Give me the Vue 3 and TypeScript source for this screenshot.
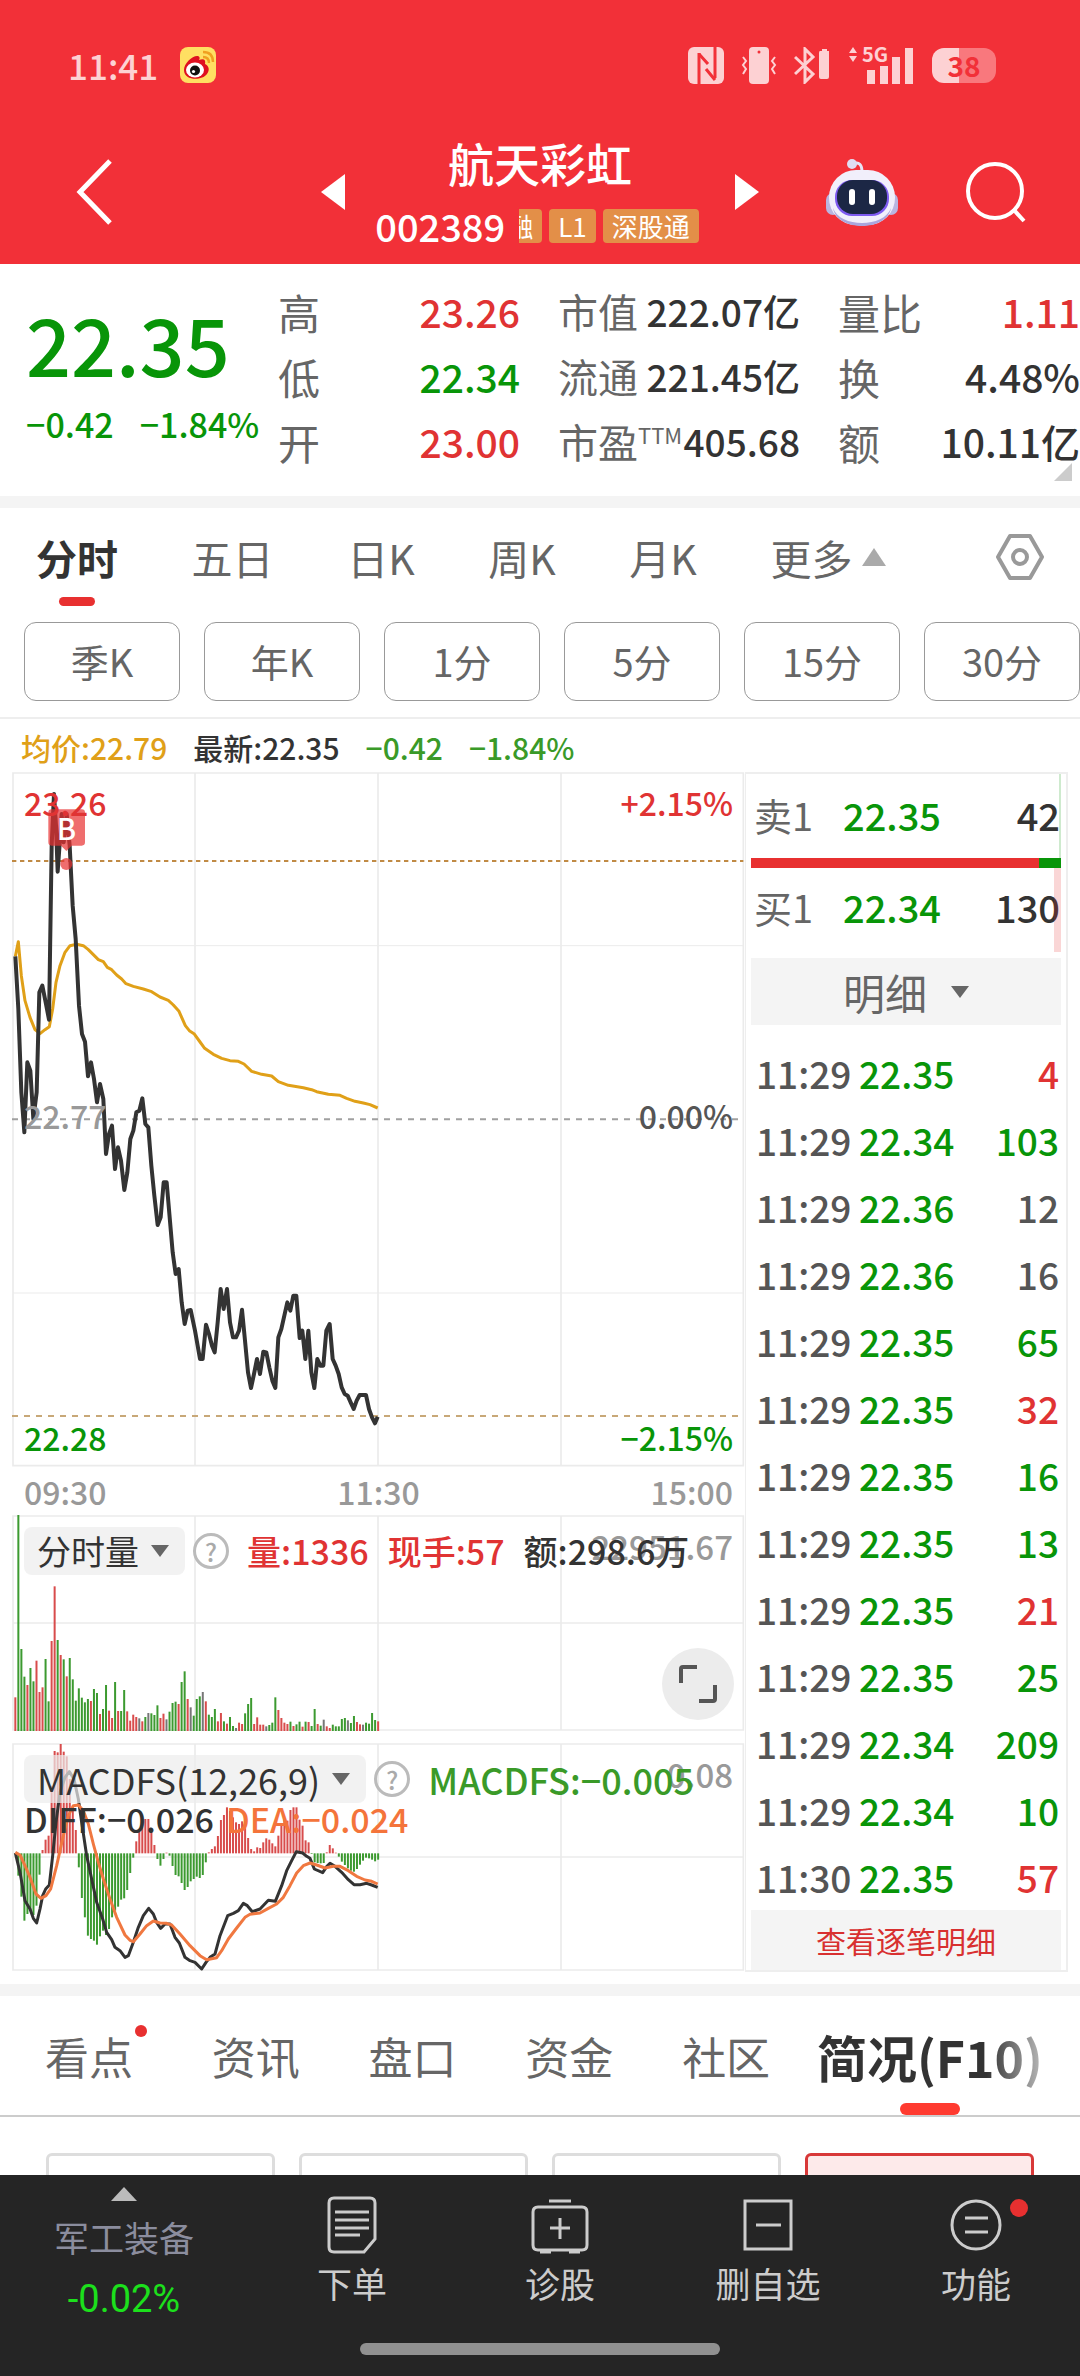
<script setup lang="ts">
import { ref } from 'vue'

type Tone = 'up' | 'down' | 'flat' | 'dark'

interface Bar {
  x: number
  y: number
  h: number
  tone: Tone
}

interface Stat {
  label: string
  sup?: string
  value: string
  tone: Tone
}

interface Trade {
  time: string
  price: string
  volume: number
  tone: Tone
}

const STEP = 9.07
const FIRST = 43
const toneOf: Record<string, Tone> = { r: 'up', g: 'down', k: 'flat' }

const stats: Stat[][] = [
  [
    { label: '高', value: '23.26', tone: 'up' },
    { label: '低', value: '22.34', tone: 'down' },
    { label: '开', value: '23.00', tone: 'up' },
  ],
  [
    { label: '市值', value: '222.07亿', tone: 'dark' },
    { label: '流通', value: '221.45亿', tone: 'dark' },
    { label: '市盈', sup: 'TTM', value: '405.68', tone: 'dark' },
  ],
  [
    { label: '量比', value: '1.11', tone: 'up' },
    { label: '换', value: '4.48%', tone: 'dark' },
    { label: '额', value: '10.11亿', tone: 'dark' },
  ],
]

const periods = ['分时', '五日', '日K', '周K', '月K']
const activePeriod = ref('分时')
const chips = ['季K', '年K', '1分', '5分', '15分', '30分']

const trades: Trade[] = [
  { time: '11:29', price: '22.35', volume: 4, tone: 'up' },
  { time: '11:29', price: '22.34', volume: 103, tone: 'down' },
  { time: '11:29', price: '22.36', volume: 12, tone: 'flat' },
  { time: '11:29', price: '22.36', volume: 16, tone: 'flat' },
  { time: '11:29', price: '22.35', volume: 65, tone: 'down' },
  { time: '11:29', price: '22.35', volume: 32, tone: 'up' },
  { time: '11:29', price: '22.35', volume: 16, tone: 'down' },
  { time: '11:29', price: '22.35', volume: 13, tone: 'down' },
  { time: '11:29', price: '22.35', volume: 21, tone: 'up' },
  { time: '11:29', price: '22.35', volume: 25, tone: 'down' },
  { time: '11:29', price: '22.34', volume: 209, tone: 'down' },
  { time: '11:29', price: '22.34', volume: 10, tone: 'down' },
  { time: '11:30', price: '22.35', volume: 57, tone: 'up' },
]

const tabs = ['看点', '资讯', '盘口', '资金', '社区', '简况(F10)']
const activeTab = ref('简况(F10)')

const priceLine =
  '46,592 55,750 64,1000 73,1120 82,910 91,935 100,1080 110,1000 118,700 127,680 137,730 147,782 155,260 162,105 168,200 173,338 180,240 185,165 191,250 200,165 209,260 218,440 227,540 237,740 246,825 255,848 264,952 273,910 282,960 291,1030 300,975 310,1020 318,1185 327,1125 336,1100 345,1230 354,1165 363,1205 373,1293 382,1240 391,1140 400,1115 409,1060 418,1055 427,1018 436,1095 445,1105 454,1220 463,1310 473,1398 482,1375 491,1270 500,1270 509,1375 518,1480 527,1545 536,1530 545,1630 554,1695 563,1655 572,1653 585,1715 600,1800 608,1800 618,1697 627,1725 636,1760 644,1780 653,1690 662,1590 671,1650 681,1590 690,1690 699,1735 708,1735 717,1715 726,1652 735,1745 744,1840 753,1887 762,1845 771,1800 780,1845 790,1778 799,1780 808,1825 817,1865 826,1887 835,1735 844,1710 853,1670 862,1630 871,1655 880,1610 889,1610 899,1737 907,1715 916,1800 925,1715 934,1840 943,1887 952,1800 961,1820 970,1820 979,1715 989,1695 998,1800 1007,1820 1016,1845 1025,1885 1034,1905 1043,1910 1052,1930 1061,1950 1070,1925 1079,1908 1098,1908 1107,1950 1116,1975 1125,1993 1133,1973'

const averageLine =
  '46,592 55,548 64,650 75,725 90,775 105,812 120,824 135,812 148,803 158,750 168,670 180,620 195,580 210,560 230,556 250,560 265,572 280,587 295,602 310,608 322,625 335,632 350,648 365,660 378,674 400,682 430,690 455,698 480,714 505,724 520,738 537,757 545,775 556,800 568,815 582,824 598,846 614,868 640,886 665,898 690,905 715,907 732,915 755,937 785,946 815,951 835,968 865,979 910,986 935,992 950,998 985,1006 1020,1009 1040,1018 1065,1027 1090,1032 1110,1037 1133,1047'

const diffLine =
  '46,372 60,430 75,515 90,540 100,568 110,582 120,540 128,500 137,480 148,468 158,380 168,280 180,190 195,145 208,128 222,150 235,210 245,280 260,380 275,450 290,520 308,570 320,610 335,632 345,655 360,665 375,685 385,680 400,640 415,595 430,560 446,538 460,555 470,580 482,598 495,585 510,585 525,625 538,642 555,685 570,695 585,700 605,720 618,700 630,685 645,675 660,620 683,560 700,553 715,545 730,523 742,530 757,548 780,540 805,514 826,517 845,470 860,425 875,395 889,368 908,372 920,382 930,388 943,420 968,431 980,413 990,403 1005,412 1025,430 1045,452 1062,467 1080,467 1100,463 1115,468 1133,475'

const deaLine =
  '46,370 60,378 75,410 90,445 108,495 123,508 138,500 152,480 170,410 190,320 205,260 220,230 235,228 250,245 265,285 280,345 295,400 310,450 330,510 350,565 375,618 390,634 400,638 420,615 440,590 460,576 480,582 500,583 515,588 540,615 570,650 600,680 620,692 650,686 665,665 685,630 710,597 735,565 750,556 780,552 805,538 830,525 850,505 870,470 890,432 910,410 930,402 950,408 975,417 1000,412 1020,412 1045,425 1070,442 1095,453 1115,457 1133,465'

const volumeTops =
  'r595 g48 g450 g533 r558 g507 g547 r485 r579 r565 g480 g607 r426 r262 g423 r468 g481 r532 g477 g541 g605 g568 g596 g610 g600 r606 g570 g582 r645 g630 g558 r635 r657 g549 r636 g636 g573 r637 r665 r647 r654 k658 r667 g654 k642 g643 g648 g619 r657 r644 k661 g638 g612 g608 r615 g549 g517 r600 k625 g650 g600 g592 k579 r607 g647 g654 g630 r667 r642 g667 r674 g654 g681 k687 r671 r675 g643 g615 g597 r675 r655 r677 r677 k682 g678 g671 g595 r633 r657 r671 r675 g668 r681 g676 g668 r683 g668 r669 g681 g630 r675 g680 k662 r682 r687 g677 g682 g682 g660 g657 k664 g672 g651 r669 r676 k677 g671 g674 g642 g663 r667'

const macdLevels = [
  373, 440, 503, 575, 555, 545, 558, 530, 437, 363, 332, 320, 170, 66, 70, 45, 68, 82, 150, 230, 303,
  415, 507, 565, 620, 630, 635, 647, 622, 605, 618, 600, 565, 545, 533, 512, 508, 483, 432, 386, 337,
  303, 270, 270, 270, 307, 348, 390, 410, 390, 371, 380, 411, 438, 442, 462, 483, 474, 457, 450, 443,
  447, 438, 400, 370, 360, 352, 321, 273, 258, 235, 246, 265, 280, 285, 277, 285, 327, 360, 367, 355,
  357, 340, 328, 332, 343, 352, 320, 290, 270, 275, 243, 235, 235, 272, 290, 334, 340, 375, 400, 402,
  403, 402, 370, 348, 358, 371, 383, 398, 408, 418, 425, 428, 420, 407, 395, 386, 388, 392, 397, 392,
]

const VOLUME_BASE = 696
const MACD_BASE = 373

const volumeBars: Bar[] = volumeTops.split(' ').map((item, i) => {
  const top = Number(item.slice(1))
  return { x: FIRST + i * STEP, y: top, h: VOLUME_BASE - top, tone: toneOf[item[0]] }
})

const macdBars: Bar[] = macdLevels.map((level, i) => ({
  x: FIRST + i * STEP,
  y: Math.min(level, MACD_BASE),
  h: Math.abs(level - MACD_BASE),
  tone: level < MACD_BASE ? 'up' : 'down',
}))
</script>

<template>
  <div class="page">
    <header class="header">
      <div class="status">
        <div class="status-side">
          <span class="clock">11:41</span>
          <svg class="weibo" viewBox="0 0 36 36" aria-hidden="true">
            <rect width="36" height="36" rx="8" fill="#ffdf62" />
            <path d="M4 23c0-7 9-15 14-14 2 1 2 2 1 4 5-2 7 0 6 4 4 2 5 6 2 10-5 7-23 7-23-4z" fill="#df1020" />
            <ellipse cx="15" cy="23" rx="9" ry="7.500" fill="#fff" />
            <circle cx="15" cy="23.500" r="5" fill="#111" />
            <circle cx="13.500" cy="24.500" r="1.600" fill="#fff" />
            <path d="M23 10c4 0 6 2 6 6M23 5c7 0 10 4 10 10" fill="none" stroke="#f0a020" stroke-width="2.400" />
          </svg>
        </div>
        <div class="status-side icons">
          <svg width="36" height="37" viewBox="0 0 36 37" aria-hidden="true">
            <rect width="36" height="37" rx="6" fill="#fdd1d3" />
            <path d="M11 37V6M27 31V0" fill="none" stroke="#f23038" stroke-width="3" />
            <path d="M11 7l9 10M18 22l9 11" fill="none" stroke="#f23038" stroke-width="3" />
          </svg>
          <svg width="36" height="37" viewBox="0 0 36 37" aria-hidden="true">
            <rect x="8" width="20" height="37" rx="4" fill="#fdd1d3" />
            <circle cx="18" cy="5" r="1.500" fill="#f23038" />
            <path d="M2 10l3 4-3 4 3 4-3 5M34 10l-3 4 3 4-3 4 3 5" fill="none" stroke="#fdd1d3" stroke-width="2" />
          </svg>
          <svg width="36" height="37" viewBox="0 0 36 37" aria-hidden="true">
            <path d="M1 10l18 17-8 8V2l8 8L1 27" fill="none" stroke="#fdd1d3" stroke-width="3" />
            <path d="M26 4h2V2h5v2h2v26q0 2-2 2h-6q-2 0-2-2V6q0-2 1-2z" fill="#fdd1d3" />
          </svg>
          <svg class="signal" width="68" height="38" viewBox="0 0 68 38" aria-hidden="true">
            <path d="M2 7l4-6 4 6zM2 10l4 6 4-6z" fill="#fdd1d3" />
            <text x="15" y="16" class="net">5G</text>
            <path d="M24 38V24M37 38V20M49 38V11M62 38V2" fill="none" stroke="#fdd1d3" stroke-width="8" />
          </svg>
          <div class="battery"><span>38</span></div>
        </div>
      </div>
      <div class="titlebar">
        <button class="plain back" aria-label="返回">
          <svg width="36" height="66" viewBox="0 0 36 66"><path d="M34 2L4 33l30 31" fill="none" stroke="#fff" stroke-width="5" /></svg>
        </button>
        <div class="stock-nav">
          <button class="plain" aria-label="上一只">
            <svg width="24" height="36" viewBox="0 0 24 36"><path d="M0 18L24 0v36z" fill="#fff" /></svg>
          </button>
          <div class="stock">
            <h1>航天彩虹</h1>
            <div class="code">
              <span>002389</span>
              <div class="tags">
                <span class="tag cut"><b>融</b></span>
                <span class="tag">L1</span>
                <span class="tag">深股通</span>
              </div>
            </div>
          </div>
          <button class="plain" aria-label="下一只">
            <svg width="24" height="36" viewBox="0 0 24 36"><path d="M24 18L0 0v36z" fill="#fff" /></svg>
          </button>
        </div>
        <div class="actions">
          <button class="plain" aria-label="智能助手">
            <svg width="72" height="68" viewBox="0 0 72 68">
              <path d="M27 6c6-3 9 1 9 8" fill="none" stroke="#e6e3f5" stroke-width="3" />
              <circle cx="26" cy="6" r="5" fill="#e0dcf2" />
              <rect x="0" y="35" width="14" height="22" rx="7" fill="#b9b5e0" />
              <rect x="58" y="35" width="14" height="22" rx="7" fill="#b9b5e0" />
              <rect x="3" y="12" width="66" height="55" rx="27" fill="#f1effb" />
              <path d="M7 50c7 20 51 20 58 0-4 24-54 24-58 0z" fill="#aaa6dd" />
              <rect x="9" y="22" width="54" height="36" rx="17" fill="#7e5bf0" />
              <rect x="11" y="22" width="50" height="34" rx="16" fill="#1c2745" />
              <rect x="23" y="31" width="6" height="16" rx="3" fill="#fff" />
              <rect x="43" y="31" width="6" height="16" rx="3" fill="#fff" />
            </svg>
          </button>
          <button class="plain" aria-label="搜索">
            <svg width="60" height="62" viewBox="0 0 60 62">
              <circle cx="29" cy="30" r="27" fill="none" stroke="#fff" stroke-width="4" />
              <path d="M47 48l11 12" stroke="#fff" stroke-width="4" />
            </svg>
          </button>
        </div>
      </div>
    </header>

    <main class="content">
      <section class="quote">
        <div class="last">
          <div class="price">22.35</div>
          <div class="change"><span>−0.42</span><span>−1.84%</span></div>
        </div>
        <dl v-for="(column, c) in stats" :key="c" class="stats" :class="{ compact: c === 1 }">
          <div v-for="s in column" :key="s.label" class="stat">
            <dt>{{ s.label }}<sup v-if="s.sup">{{ s.sup }}</sup></dt>
            <dd :class="s.tone">{{ s.value }}</dd>
          </div>
        </dl>
        <i class="corner"></i>
      </section>

      <nav class="periods">
        <button
          v-for="p in periods"
          :key="p"
          class="plain period"
          :class="{ active: p === activePeriod }"
          @click="activePeriod = p"
        >{{ p }}</button>
        <button class="plain period more">更多<i class="tri-up"></i></button>
        <button class="plain gear" aria-label="设置">
          <svg width="48" height="46" viewBox="0 0 48 46">
            <path d="M14 2h20l12 21-12 21H14L2 23z" fill="none" stroke="#999" stroke-width="4" stroke-linejoin="round" />
            <circle cx="24" cy="23" r="7" fill="none" stroke="#999" stroke-width="4" />
          </svg>
        </button>
      </nav>
      <div class="chips">
        <button v-for="c in chips" :key="c" class="chip">{{ c }}</button>
      </div>

      <div class="info">
        <span class="avg">均价:22.79</span>
        <span class="dark">最新:22.35</span>
        <span class="soft">−0.42</span>
        <span class="soft">−1.84%</span>
      </div>

      <section class="board">
        <div class="charts">
          <div class="panel panel-price">
            <svg viewBox="36 39 2199 2085" preserveAspectRatio="none" aria-hidden="true">
              <g class="grid">
                <path d="M39 42H2230V2120H39zM585 42V2120M1134 42V2120M1683 42V2120" />
                <path d="M39 560H2230M39 1602H2230" class="thin" />
              </g>
              <path d="M36 306H2230" class="dash-high" />
              <path d="M36 1081H2230" class="dash-mid" />
              <path d="M36 1971H2230" class="dash-low" />
              <polyline :points="averageLine" class="line average" />
              <polyline :points="priceLine" class="line main-line" />
              <path d="M155 151h90q10 0 10 10v89q0 10-10 10h-30l-16 16-16-16h-28q-10 0-10-10v-89q0-10 10-10z" class="mark" />
              <circle cx="199" cy="315" r="18" class="mark" />
            </svg>
            <b class="marker">B</b>
            <div class="scale scale-high"><span class="up">23.26</span><span class="up">+2.15%</span></div>
            <div class="scale scale-mid"><span>22.77</span><span class="flat">0.00%</span></div>
            <div class="scale scale-low"><span class="down">22.28</span><span class="down">−2.15%</span></div>
          </div>
          <div class="times"><span>09:30</span><span>11:30</span><span>15:00</span></div>

          <div class="panel panel-volume">
            <svg viewBox="36 48 2199 648" preserveAspectRatio="none" aria-hidden="true">
              <path d="M39 51H2230V693H39zM585 51V693M1134 51V693M1683 51V693M39 372H2230" class="grid" />
              <rect v-for="(b, i) in volumeBars" :key="i" :x="b.x" :y="b.y" width="6" :height="b.h" :class="'bar-' + b.tone" />
            </svg>
            <span class="peak">22951.67</span>
            <div class="legend">
              <button class="picker">分时量<i class="tri-down"></i></button>
              <button class="plain help" aria-label="说明">?</button>
              <span class="up">量:1336</span>
              <span class="up">现手:57</span>
              <span class="dark">额:298.6万</span>
            </div>
            <button class="plain expand" aria-label="全屏">
              <svg width="38" height="38" viewBox="0 0 38 38">
                <path d="M2 18V4q0-2 2-2h14M36 20v14q0 2-2 2H20" fill="none" stroke="#555" stroke-width="4" />
              </svg>
            </button>
          </div>

          <div class="panel panel-macd">
            <svg viewBox="36 42 2199 684" preserveAspectRatio="none" aria-hidden="true">
              <path d="M39 45H2230V723H39zM585 45V723M1134 45V723M1683 45V723M39 384H2230" class="grid" />
              <rect v-for="(b, i) in macdBars" :key="i" :x="b.x" :y="b.y" width="6" :height="b.h" :class="'bar-' + b.tone" />
              <polyline :points="diffLine" class="line diff" />
              <polyline :points="deaLine" class="line dea" />
            </svg>
            <span class="peak">0.08</span>
            <div class="legend legend-macd">
              <button class="picker">MACDFS(12,26,9)<i class="tri-down"></i></button>
              <button class="plain help" aria-label="说明">?</button>
              <span class="soft">MACDFS:−0.005</span>
            </div>
            <div class="legend-two"><span class="dark">DIFF:−0.026</span><span class="orange">DEA:−0.024</span></div>
          </div>
        </div>

        <aside class="book">
          <div class="level">
            <span class="side">卖1</span><span class="level-price">22.35</span><span class="level-qty">42</span>
            <i class="depth sell"></i>
          </div>
          <div class="ratio"><i></i></div>
          <div class="level bid">
            <span class="side">买1</span><span class="level-price">22.34</span><span class="level-qty">130</span>
            <i class="depth buy"></i>
          </div>
          <button class="detail">明细<i class="tri-down"></i></button>
          <table class="trades">
            <tbody>
              <tr v-for="(t, i) in trades" :key="i">
                <td class="flat time">{{ t.time }}</td>
                <td class="down">{{ t.price }}</td>
                <td class="qty" :class="t.tone">{{ t.volume }}</td>
              </tr>
            </tbody>
          </table>
          <button class="all">查看逐笔明细</button>
        </aside>
      </section>

      <nav class="tabs">
        <button
          v-for="t in tabs"
          :key="t"
          class="plain tab"
          :class="{ active: t === activeTab, dot: t === '看点' }"
          @click="activeTab = t"
        ><span>{{ t }}</span></button>
      </nav>
      <div class="cards"><i></i><i></i><i></i><i class="on"></i></div>
    </main>

    <footer class="bottom">
      <div class="dock">
        <a href="#" class="sector">
          <i class="tri-up"></i>
          <span>军工装备</span>
          <em>-0.02%</em>
        </a>
        <a href="#" class="entry">
          <svg width="50" height="58" viewBox="0 0 50 58">
            <path d="M7 2h36q5 0 5 5v36L37 56H7q-5 0-5-5V7q0-5 5-5z" />
            <path d="M8 16h34M8 24h34M8 32h34M8 39h25" />
          </svg>
          <span>下单</span>
        </a>
        <a href="#" class="entry">
          <svg width="58" height="58" viewBox="0 0 58 58">
            <path d="M18 5h22M7 11h44q5 0 5 5v33q0 5-5 5H7q-5 0-5-5V16q0-5 5-5zM29 22v21M19 32h20M9 56h11M38 56h11" />
          </svg>
          <span>诊股</span>
        </a>
        <a href="#" class="entry">
          <svg width="50" height="58" viewBox="0 0 50 58"><path d="M2 5h46v48H2zM13 29h25" /></svg>
          <span>删自选</span>
        </a>
        <a href="#" class="entry badge">
          <svg width="52" height="58" viewBox="0 0 52 58"><circle cx="26" cy="29" r="24" /><path d="M15 22h23M15 36h23" /></svg>
          <span>功能</span>
        </a>
      </div>
      <div class="handle"></div>
    </footer>
  </div>
</template>

<style>
body {
  background: #fff;
}
</style>

<style scoped>
.page {
  display: flex;
  flex-direction: column;
  height: 100vh;
  overflow: hidden;
  font-family: 'Noto Sans CJK SC', 'Noto Sans', sans-serif;
  color: #333;
}
.page * {
  box-sizing: border-box;
}
svg {
  display: block;
  flex: none;
}
i,
em {
  font-style: normal;
}
a {
  text-decoration: none;
}
button {
  font: inherit;
  color: inherit;
  cursor: pointer;
  white-space: nowrap;
}
.plain {
  border: 0;
  padding: 0;
  background: none;
}
.up {
  color: #e03333;
}
.down {
  color: #089508;
}
.flat {
  color: #555;
}
.dark {
  color: #333;
}
.soft {
  color: #3a9a28;
}
.orange {
  color: #f4743b;
}

/* header */
.header {
  flex: none;
  background: #f23038;
  color: #fff;
}
.status {
  display: flex;
  justify-content: space-between;
  align-items: center;
  height: 124px;
  padding: 6px 84px 0 68px;
}
.status-side {
  display: flex;
  align-items: center;
  gap: 22px;
}
.icons {
  gap: 17px;
}
.clock {
  font-size: 35px;
  font-weight: 500;
  line-height: 36px;
  color: #fdd1d3;
}
.weibo {
  width: 36px;
  height: 36px;
}
.signal {
  overflow: visible;
}
.net {
  font-size: 20px;
  font-weight: 700;
  fill: #fdd1d3;
}
.battery {
  width: 64px;
  height: 35px;
  border-radius: 12px;
  background: linear-gradient(to right, #fdd1d3 42%, #f9787d 42%);
  color: #f23038;
  font-size: 28px;
  font-weight: 700;
  line-height: 35px;
  text-align: center;
}
.titlebar {
  display: grid;
  grid-template-columns: 1fr auto 1fr;
  align-items: center;
  height: 140px;
  padding-bottom: 4px;
}
.back {
  justify-self: start;
  padding-left: 76px;
}
.stock-nav {
  display: flex;
  align-items: center;
}
.stock {
  display: flex;
  flex-direction: column;
  align-items: center;
  width: 390px;
}
h1 {
  margin: 0;
  font-size: 46px;
  font-weight: 500;
  line-height: 68px;
}
.code {
  display: flex;
  align-items: center;
  gap: 14px;
  font-size: 38px;
  font-weight: 500;
  line-height: 60px;
}
.tags {
  display: flex;
  gap: 7px;
  padding-right: 6px;
}
.tag {
  height: 34px;
  padding: 0 9px;
  border-radius: 4px;
  background: #e38f48;
  font-size: 26px;
  font-weight: 400;
  line-height: 34px;
}
.tag.cut {
  display: flex;
  justify-content: flex-end;
  width: 23px;
  border-radius: 0 4px 4px 0;
  overflow: hidden;
}
.tag.cut b {
  font-weight: 400;
}
.actions {
  display: flex;
  justify-content: flex-end;
  align-items: center;
  gap: 68px;
  padding-right: 54px;
}

/* quote */
.content {
  flex: 1;
  min-height: 0;
  overflow: hidden;
}
.quote {
  position: relative;
  display: grid;
  grid-template-columns: 214px 1fr 1fr 1fr;
  gap: 38px;
  height: 244px;
  padding: 15px 0 0 26px;
  border-bottom: 12px solid #f4f4f4;
}
.last {
  color: #089508;
  font-weight: 500;
  white-space: nowrap;
}
.price {
  font-size: 79px;
  line-height: 128px;
}
.change {
  display: flex;
  gap: 26px;
  font-size: 34px;
  line-height: 34px;
}
.stats {
  margin: 0;
  font-size: 39px;
}
.compact {
  font-size: 37px;
}
.stat {
  display: flex;
  justify-content: space-between;
  height: 65px;
  line-height: 65px;
  white-space: nowrap;
}
dt {
  position: relative;
  font-size: 42px;
  color: #666;
}
.compact dt {
  font-size: 40px;
}
dt sup {
  position: absolute;
  left: 100%;
  top: 0;
  font-size: 22px;
  line-height: 50px;
}
dd {
  margin: 0;
  font-weight: 500;
}
.corner {
  position: absolute;
  right: 8px;
  bottom: 15px;
  border-left: 18px solid transparent;
  border-bottom: 18px solid #ccc;
}

/* periods */
.periods {
  display: flex;
  justify-content: space-between;
  align-items: center;
  height: 98px;
  padding: 0 36px 0 36px;
}
.period {
  position: relative;
  font-size: 41px;
  line-height: 94px;
  height: 98px;
  color: #666;
}
.period.active {
  font-weight: 700;
  color: #333;
}
.period.active::after {
  content: '';
  position: absolute;
  left: 50%;
  bottom: 0;
  width: 36px;
  height: 9px;
  margin-left: -18px;
  border-radius: 5px;
  background: #e83030;
}
.more {
  display: flex;
  align-items: center;
  gap: 10px;
}
.tri-up {
  border: 12px solid transparent;
  border-top: 0;
  border-bottom: 18px solid #aaa;
}
.tri-down {
  border: 9px solid transparent;
  border-bottom: 0;
  border-top: 12px solid #666;
}
.gear {
  margin-left: 36px;
}
.chips {
  display: flex;
  gap: 24px;
  height: 113px;
  padding: 16px 0 18px 24px;
  border-bottom: 2px solid #eee;
}
.chip {
  flex: 1;
  height: 79px;
  padding: 0 0 2px;
  border: 1px solid #999;
  border-radius: 12px;
  background: #fff;
  font-size: 38px;
  line-height: 74px;
  color: #666;
}
.info {
  display: flex;
  gap: 26px;
  height: 53px;
  padding: 0 21px;
  font-size: 30px;
  font-weight: 500;
  line-height: 56px;
}
.avg {
  color: #e0a018;
}

/* charts */
.board {
  display: grid;
  grid-template-columns: 733fr 323fr;
  padding: 0 12px;
  border-bottom: 12px solid #f4f4f4;
  height: 1224px;
}
.charts {
  min-width: 0;
}
.panel {
  position: relative;
}
.panel > svg {
  width: 100%;
  height: 100%;
}
.panel-price {
  height: 695px;
}
.panel-volume {
  height: 216px;
  margin-bottom: 12px;
}
.panel-macd {
  height: 228px;
}
.grid {
  fill: none;
  stroke: #ebebeb;
  stroke-width: 5;
}
.thin {
  stroke-width: 3;
}
.dash-high,
.dash-mid,
.dash-low {
  fill: none;
  stroke-width: 6;
}
.dash-high {
  stroke: #c08a44;
  stroke-dasharray: 13 11;
}
.dash-mid {
  stroke: #a0a0a0;
  stroke-dasharray: 18 18;
}
.dash-low {
  stroke: #c8a878;
  stroke-dasharray: 18 18;
}
.line {
  fill: none;
  stroke-linejoin: round;
}
.average {
  stroke: #e0a018;
  stroke-width: 9;
}
.main-line {
  stroke: #333;
  stroke-width: 12;
}
.diff {
  stroke: #333;
  stroke-width: 9;
}
.dea {
  stroke: #f07840;
  stroke-width: 9;
}
.mark {
  fill: rgba(232, 48, 48, 0.7);
}
.bar-up {
  fill: #d84c4c;
}
.bar-down {
  fill: #3c9a30;
}
.bar-flat {
  fill: #777;
}
.marker {
  position: absolute;
  left: 36px;
  top: 37px;
  width: 37px;
  font-size: 29px;
  font-weight: 500;
  line-height: 37px;
  text-align: center;
  color: #fff;
}
.scale {
  position: absolute;
  left: 12px;
  right: 12px;
  display: flex;
  justify-content: space-between;
  font-size: 32px;
  font-weight: 500;
  line-height: 40px;
  color: #999;
}
.scale-high {
  top: 10px;
}
.scale-mid {
  top: 323px;
}
.scale-low {
  bottom: 10px;
}
.times {
  display: flex;
  justify-content: space-between;
  height: 48px;
  padding: 0 12px;
  font-size: 32px;
  font-weight: 500;
  line-height: 48px;
  color: #999;
}
.peak {
  position: absolute;
  top: 8px;
  right: 12px;
  font-size: 33px;
  font-weight: 500;
  line-height: 46px;
  color: #999;
}
.legend,
.legend-two {
  position: absolute;
  left: 12px;
  top: 12px;
  display: flex;
  align-items: center;
  height: 48px;
  font-size: 34px;
  font-weight: 500;
  line-height: 48px;
  white-space: nowrap;
}
.legend-macd {
  font-size: 36px;
}
.legend-two {
  top: 52px;
  gap: 12px;
}
.legend > span {
  margin-right: 19px;
}
.picker {
  display: flex;
  align-items: center;
  gap: 12px;
  height: 48px;
  padding: 0 16px 0 13px;
  border: 0;
  border-radius: 8px;
  background: rgba(236, 236, 236, 0.7);
  font-weight: 400;
}
.help {
  width: 36px;
  height: 36px;
  margin: 0 18px 0 8px;
  border: 3px solid #bbb;
  border-radius: 50%;
  font-size: 25px;
  line-height: 30px;
  color: #aaa;
}
.expand {
  position: absolute;
  right: 11px;
  bottom: 11px;
  display: grid;
  place-items: center;
  width: 72px;
  height: 72px;
  border-radius: 50%;
  background: #ececec;
}

/* order book */
.book {
  display: flex;
  flex-direction: column;
  height: 1200px;
  padding: 0 5px;
  border: 2px solid #eee;
  border-left-width: 1px;
}
.level {
  position: relative;
  display: flex;
  height: 84px;
  padding: 0 1px 0 3px;
  font-size: 38px;
  font-weight: 500;
  line-height: 82px;
}
.level.bid {
  line-height: 78px;
}
.side {
  width: 89px;
  font-weight: 400;
  color: #666;
}
.level-price {
  color: #089508;
}
.level-qty {
  flex: 1;
  text-align: right;
}
.depth {
  position: absolute;
  right: 0;
  top: 0;
  width: 2px;
  height: 84px;
  background: rgba(8, 149, 8, 0.2);
}
.depth.buy {
  width: 7px;
  background: rgba(232, 48, 48, 0.2);
}
.ratio {
  height: 10px;
  background: #089508;
}
.ratio i {
  display: block;
  width: 93%;
  height: 10px;
  background: #e83030;
}
.detail {
  display: flex;
  flex: none;
  justify-content: center;
  align-items: center;
  gap: 24px;
  height: 67px;
  margin: 6px 0 14px;
  padding: 0;
  border: 0;
  background: #f4f4f4;
  font-size: 42px;
  line-height: 66px;
  color: #666;
}
.trades {
  width: 100%;
  border-collapse: collapse;
  font-size: 37px;
  font-weight: 500;
}
.trades td {
  height: 67px;
  padding: 0;
  line-height: 66px;
}
.trades .time {
  width: 108px;
  padding-left: 5px;
}
.trades .qty {
  padding-right: 2px;
  text-align: right;
}
.all {
  flex: none;
  height: 60px;
  padding: 0;
  border: 0;
  background: #f4f4f4;
  font-size: 30px;
  line-height: 58px;
  color: #d83030;
}

/* section tabs */
.tabs {
  display: flex;
  justify-content: space-between;
  height: 121px;
  padding: 0 37px 0 45px;
  border-bottom: 2px solid #ccc;
}
.tab {
  position: relative;
  font-size: 44px;
  line-height: 120px;
  color: #666;
}
.tab.active {
  margin-left: -22px;
  font-size: 50px;
  font-weight: 700;
}
.tab.active span {
  background: linear-gradient(to right, #333 75%, #bbb);
  background-clip: text;
  color: transparent;
}
.tab.active::after {
  content: '';
  position: absolute;
  left: 50%;
  bottom: 0;
  width: 60px;
  height: 12px;
  margin-left: -30px;
  border-radius: 6px;
  background: #ff3b30;
}
.dot {
  margin-right: 10px;
}
.dot::before {
  content: '';
  position: absolute;
  right: -14px;
  top: 29px;
  width: 12px;
  height: 12px;
  border-radius: 50%;
  background: #e83030;
}
.cards {
  display: grid;
  grid-template-columns: repeat(4, 1fr);
  gap: 24px;
  padding: 36px 46px 0;
}
.cards i {
  height: 80px;
  border: 3px solid #ddd;
  border-radius: 6px;
}
.cards .on {
  border-color: #d83838;
  background: #fdeaea;
}

/* bottom bar */
.bottom {
  flex: none;
  height: 201px;
  background: #252525;
}
.dock {
  display: grid;
  grid-template-columns: 248fr 208fr 208fr 208fr 208fr;
  height: 168px;
}
.sector,
.entry {
  display: flex;
  flex-direction: column;
  align-items: center;
  font-size: 35px;
  color: #ccc;
}
.sector {
  padding-top: 12px;
  line-height: 50px;
  color: #8b8d9e;
}
.sector .tri-up {
  border-width: 0 13px 14px;
  border-bottom-color: #bbb;
}
.sector span {
  padding: 11px 0 12px;
}
.sector em {
  font-family: Roboto, sans-serif;
  font-size: 38px;
  color: #1ce01c;
}
.entry {
  padding-top: 21px;
  line-height: 58px;
}
.entry svg {
  fill: none;
  stroke: #ccc;
  stroke-width: 3;
}
.badge {
  position: relative;
}
.badge::after {
  content: '';
  position: absolute;
  left: 50%;
  top: 24px;
  width: 18px;
  height: 18px;
  margin-left: 34px;
  border-radius: 50%;
  background: #e83030;
}
.handle {
  width: 360px;
  height: 12px;
  margin: 0 auto;
  border-radius: 6px;
  background: #919191;
}
</style>
